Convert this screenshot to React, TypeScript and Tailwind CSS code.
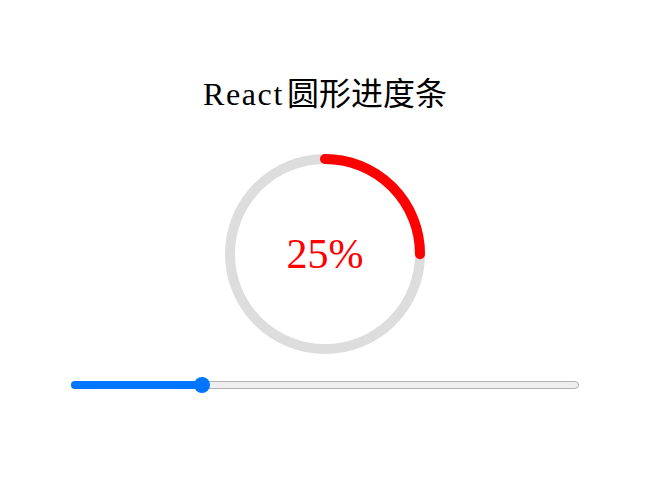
import { useState } from "react";

function CircleProgress({ percent }: { percent: number }) {
    const r = 95;
    const len = 2 * Math.PI * r;
    const offset = len * (1 - percent / 100);

    return (
        <div className="relative w-[200px] h-[200px]">
            <svg width="200" height="200" viewBox="0 0 200 200" className="-rotate-90">
                <circle cx="100" cy="100" r={r} fill="none" stroke="#dddddd" strokeWidth="10" />
                <circle
                    cx="100"
                    cy="100"
                    r={r}
                    fill="none"
                    stroke="#ff0000"
                    strokeWidth="10"
                    strokeLinecap="round"
                    strokeDasharray={len}
                    style={{ strokeDashoffset: offset }}
                />
            </svg>
            <div className="absolute inset-0 flex items-center justify-center text-[42px] text-[#ff0000] font-['Liberation_Serif',serif]">
                {percent}%
            </div>
        </div>
    );
}

// range input with a chrome-like look: grey track, blue fill, round thumb
function Slider({ value, onChange }: { value: number; onChange: (v: number) => void }) {
    const width = 508;
    const thumb = 16;
    const fill = thumb / 2 + (value / 100) * (width - thumb);

    return (
        <div className="relative w-[508px] h-4 flex items-center">
            <div className="w-full h-2 rounded-full bg-[#efefef] border border-[#b2b2b2]" />
            <div className="absolute left-0 h-2 rounded-full bg-[#0075ff]" style={{ width: fill }} />
            <input
                type="range"
                min={0}
                max={100}
                value={value}
                onChange={(e) => onChange(Number(e.target.value))}
                className="absolute inset-0 w-full h-4 m-0 appearance-none bg-transparent cursor-pointer [&::-webkit-slider-thumb]:appearance-none [&::-webkit-slider-thumb]:w-4 [&::-webkit-slider-thumb]:h-4 [&::-webkit-slider-thumb]:rounded-full [&::-webkit-slider-thumb]:bg-[#0075ff]"
            />
        </div>
    );
}

export default function App() {
    const [value, setValue] = useState(25);

    return (
        <div className="min-h-screen bg-white flex flex-col items-center pt-[74px]">
            <h2 className="h-10 leading-10 text-[32px] text-black font-['Liberation_Serif','Noto_Sans_CJK_SC',serif]">
                <span className="tracking-[1.6px] mr-[3px]">React</span>圆形进度条
            </h2>
            <div className="mt-10">
                <CircleProgress percent={value} />
            </div>
            <div className="mt-[23px]">
                <Slider value={value} onChange={setValue} />
            </div>
        </div>
    );
}
